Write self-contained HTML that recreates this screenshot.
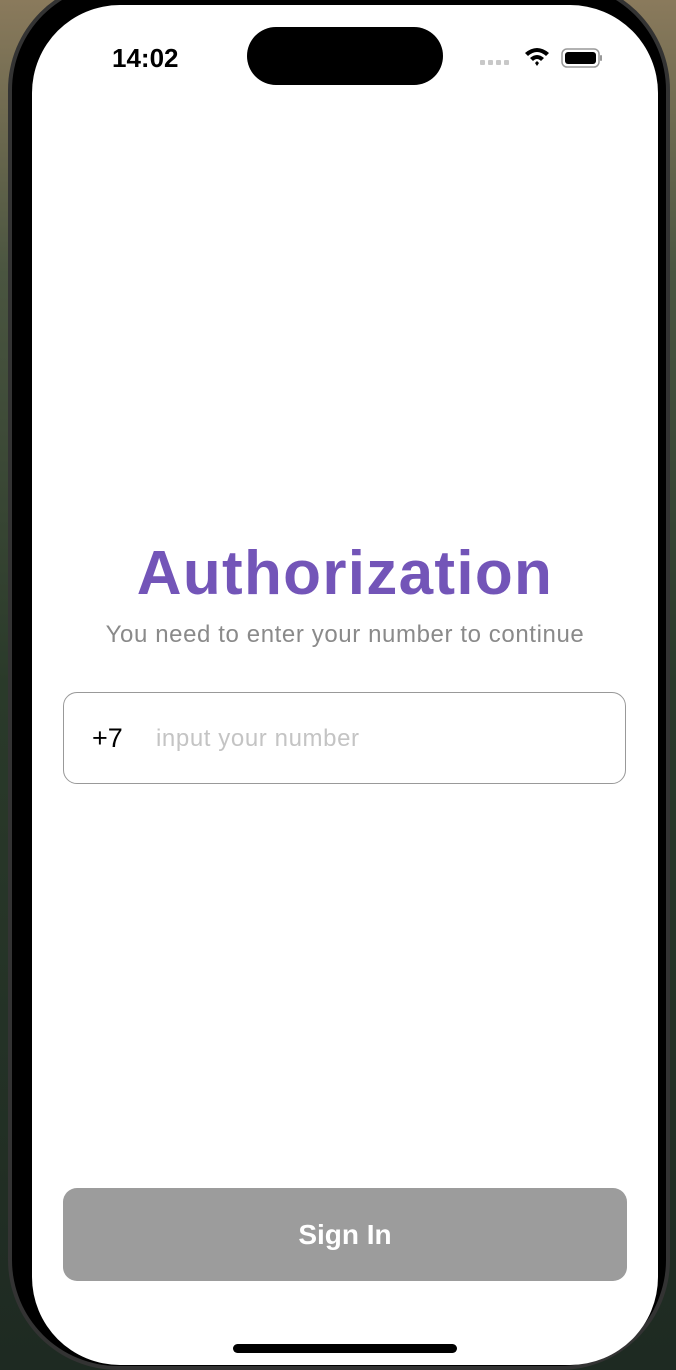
<!DOCTYPE html>
<html><head><style>
html,body{margin:0;padding:0}
body{width:676px;height:1370px;overflow:hidden;position:relative;background:linear-gradient(180deg,#8a7a5c 0%,#4a5540 20%,#2a3a2a 50%,#1e2a22 100%);font-family:"Liberation Sans",sans-serif}
.frame{position:absolute;left:8px;top:-20px;width:662px;height:1390px;background:#333;border-radius:110px}
.frame2{position:absolute;left:12px;top:-16px;width:654px;height:1382px;background:#000;border-radius:106px}
.screen{position:absolute;left:32px;top:5px;width:626px;height:1360px;background:#fff;border-radius:88px;overflow:hidden}
.island{position:absolute;left:215px;top:22px;width:196px;height:58px;background:#000;border-radius:29px}
.time{position:absolute;left:80px;top:38px;font-size:26px;font-weight:bold;color:#000}
.h1{position:absolute;left:0;width:626px;top:533px;text-align:center;font-size:62px;font-weight:bold;color:#7355b8;letter-spacing:1.3px}
.sub{position:absolute;left:0;width:626px;top:616px;text-align:center;font-size:24px;color:#8a8a8a;letter-spacing:0.6px}
.input{position:absolute;left:31px;top:687px;width:561px;height:90px;border:1.5px solid #999;border-radius:14px}
.p7{position:absolute;left:28px;top:30px;font-size:27px;color:#000}
.ph{position:absolute;left:92px;top:32px;font-size:24px;color:#c4c4c4;letter-spacing:0.6px}
.btn{position:absolute;left:31px;top:1183px;width:564px;height:93px;background:#9c9c9c;border-radius:14px;color:#fff;font-weight:bold;font-size:28px;text-align:center;line-height:93px}
.home{position:absolute;left:201px;top:1339px;width:224px;height:9px;background:#000;border-radius:5px}
</style></head><body>
<div class="frame"></div><div class="frame2"></div>
<div class="screen">
<div class="time">14:02</div>
<div class="island"></div>
<svg style="position:absolute;left:448px;top:38px" width="124" height="28" viewBox="0 0 124 28">
<g fill="#c8c8c8"><rect x="0" y="17" width="5" height="5" rx="1"/><rect x="8" y="17" width="5" height="5" rx="1"/><rect x="16" y="17" width="5" height="5" rx="1"/><rect x="24" y="17" width="5" height="5" rx="1"/></g>
<path d="M45 10 Q57 0 69 10 L66 13 Q57 5 48 13Z M50 15 Q57 9 64 15 L61 18 Q57 14 53 18Z M55 20 L57 18 L59 20 L57 23Z" fill="#000"/>
<rect x="82" y="6" width="37" height="18" rx="5" fill="#fff" stroke="#999" stroke-width="1.5"/>
<rect x="85" y="9" width="31" height="12" rx="3" fill="#000"/>
<rect x="120" y="12" width="2" height="6" rx="1" fill="#999"/>
</svg>
<div class="h1">Authorization</div>
<div class="sub">You need to enter your number to continue</div>
<div class="input"><span class="p7">+7</span><span class="ph">input your number</span></div>
<div class="btn">Sign In</div>
<div class="home"></div>
</div>
</body></html>
